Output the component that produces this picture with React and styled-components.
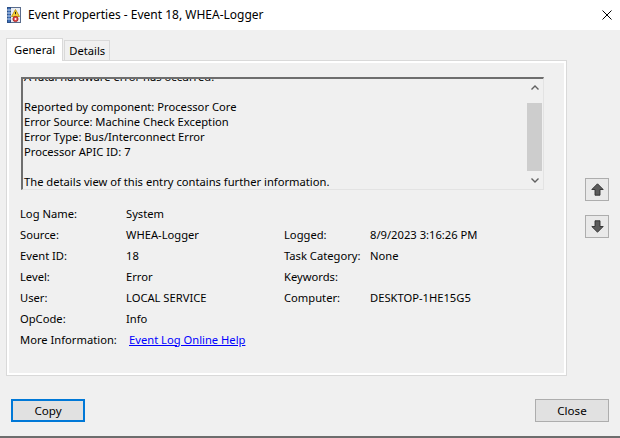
import React from 'react';
import styled, { createGlobalStyle } from 'styled-components';

const Global = createGlobalStyle`
  html, body { margin: 0; padding: 0; background: #f0f0f0; }
  body {
    font-family: "Noto Sans", "Open Sans", sans-serif;
    font-size: 11.2px;
    color: #000;
  }
`;

const Window = styled.div`
  width: 620px;
  height: 438px;
  box-sizing: border-box;
  background: #f0f0f0;
  border-bottom: 2px solid #6d6d6d;
  display: flex;
  flex-direction: column;
  overflow: hidden;
`;

const TitleBar = styled.div`
  height: 30px;
  flex: none;
  background: #fff;
  display: flex;
  align-items: center;
  padding-left: 7px;
  gap: 7px;
`;

const TitleText = styled.div`
  flex: 1;
  font-size: 12px;
  line-height: 16px;
  white-space: nowrap;
`;

const CloseX = styled.div`
  width: 10px;
  height: 10px;
  margin-right: 8px;
  display: flex;
`;

const Main = styled.div`
  display: flex;
  margin-top: 8px;
  padding-left: 6px;
`;

const TabArea = styled.div`
  width: 561px;
  display: flex;
  flex-direction: column;
`;

const TabStrip = styled.div`
  height: 22px;
  display: flex;
  align-items: flex-end;
  position: relative;
  z-index: 1;
`;

const Tab = styled.div`
  box-sizing: border-box;
  height: ${p => (p.$active ? 23 : 20)}px;
  margin-bottom: ${p => (p.$active ? -1 : 0)}px;
  margin-left: ${p => (p.$active ? 0 : 1)}px;
  padding: ${p => (p.$active ? '2px 7px 0 7px' : '1px 4px 0 4px')};
  background: ${p => (p.$active ? '#fff' : '#f0f0f0')};
  border: 1px solid #d9d9d9;
  border-bottom: none;
  line-height: 17px;
  white-space: nowrap;
`;

const Panel = styled.div`
  box-sizing: border-box;
  height: 316px;
  border: 1px solid #d9d9d9;
  box-shadow: inset 0 0 0 2px #fff;
  padding: 16px 0 0 14px;
  display: flex;
  flex-direction: column;
`;

const TextBox = styled.div`
  box-sizing: border-box;
  width: 523px;
  height: 113px;
  border-top: 2px solid #6e6e6e;
  border-left: 2px solid #6e6e6e;
  border-right: 1px solid #e3e3e3;
  border-bottom: 1px solid #e3e3e3;
  display: flex;
  background: #f0f0f0;
`;

const TextViewport = styled.div`
  flex: 1;
  overflow: hidden;
  padding-left: 1px;
`;

const TextContent = styled.div`
  margin-top: -10px;
  line-height: 15px;
  white-space: pre;
`;

const ScrollBar = styled.div`
  width: 17px;
  display: flex;
  flex-direction: column;
  background: #f0f0f0;
`;

const ScrollBtn = styled.div`
  height: 17px;
  display: flex;
  align-items: center;
  justify-content: center;
`;

const ScrollTrack = styled.div`
  flex: 1;
  display: flex;
  flex-direction: column;
  align-items: center;
`;

const Thumb = styled.div`
  width: 15px;
  background: #cdcdcd;
`;

const Fields = styled.div`
  margin-top: 13px;
  margin-left: -1px;
  display: grid;
  grid-template-columns: 106px 158px 86px 1fr;
  grid-auto-rows: 21px;
  align-items: center;
  line-height: 16px;
`;

const Cell = styled.div`
  white-space: nowrap;
`;

const Link = styled.a`
  color: #0000ff;
  text-decoration: underline;
  margin-left: 3px;
  cursor: pointer;
`;

const Side = styled.div`
  margin-left: 18px;
  padding-top: 140px;
  display: flex;
  flex-direction: column;
  gap: 14px;
`;

const ArrowBtn = styled.div`
  box-sizing: border-box;
  width: 24px;
  height: 23px;
  border: 1px solid #adadad;
  background: #e9e9e9;
  display: flex;
  align-items: center;
  justify-content: center;
`;

const Footer = styled.div`
  margin-top: 23px;
  padding: 0 11px;
  display: flex;
  justify-content: space-between;
`;

const Button = styled.div`
  box-sizing: border-box;
  width: 74px;
  height: 23px;
  background: #e1e1e1;
  border: ${p => (p.$default ? '2px solid #0078d7' : '1px solid #adadad')};
  display: flex;
  align-items: center;
  justify-content: center;
  font-size: 11.6px;
  line-height: 16px;
`;

const LogIcon = () => (
  <svg width="14" height="16" viewBox="0 0 14 16">
    <rect x="2.5" y="0.5" width="11" height="15" fill="#e8edf5" stroke="#5a6c8c" />
    <rect x="0.5" y="0.5" width="3" height="15" fill="#3d6fb8" stroke="#2b4f86" />
    <path d="M0 3h4M0 6h4M0 9h4M0 12h4" stroke="#c9d6ea" strokeWidth="1" />
    <path d="M8.5 2.5 L12.5 9.5 H4.5 Z" fill="#f6d23a" stroke="#b58b00" strokeWidth="0.8" />
    <path d="M8.5 4.8v2.4" stroke="#222" strokeWidth="1" />
    <circle cx="8.5" cy="12" r="2.6" fill="#e04848" stroke="#9c1f1f" strokeWidth="0.8" />
    <circle cx="8.5" cy="12" r="1" fill="#fff" />
  </svg>
);

const Chevron = ({ up }) => (
  <svg width="8" height="5" viewBox="0 0 8 5">
    <path d={up ? 'M0.5 4.5 L4 1 L7.5 4.5' : 'M0.5 0.5 L4 4 L7.5 0.5'} fill="none" stroke="#606060" strokeWidth="1.4" />
  </svg>
);

const BlockArrow = ({ up }) => (
  <svg width="13" height="13" viewBox="0 0 13 13">
    <path
      d={up ? 'M6.5 0.8 L12.2 6.5 H9 V12.2 H4 V6.5 H0.8 Z' : 'M6.5 12.2 L12.2 6.5 H9 V0.8 H4 V6.5 H0.8 Z'}
      fill="#5c5c5c"
      stroke="#2e2e2e"
      strokeWidth="0.9"
      strokeLinejoin="round"
    />
  </svg>
);

const message = [
  'A fatal hardware error has occurred.',
  '',
  'Reported by component: Processor Core',
  'Error Source: Machine Check Exception',
  'Error Type: Bus/Interconnect Error',
  'Processor APIC ID: 7',
  '',
  'The details view of this entry contains further information.',
].join('\n');

const rows = [
  ['Log Name:', 'System', '', ''],
  ['Source:', 'WHEA-Logger', 'Logged:', '8/9/2023 3:16:26 PM'],
  ['Event ID:', '18', 'Task Category:', 'None'],
  ['Level:', 'Error', 'Keywords:', ''],
  ['User:', 'LOCAL SERVICE', 'Computer:', 'DESKTOP-1HE15G5'],
  ['OpCode:', 'Info', '', ''],
];

export default function App() {
  return (
    <>
      <Global />
      <Window>
        <TitleBar>
          <LogIcon />
          <TitleText>Event Properties - Event 18, WHEA-Logger</TitleText>
          <CloseX>
            <svg width="10" height="10" viewBox="0 0 10 10">
              <path d="M0.5 0.5 L9.5 9.5 M9.5 0.5 L0.5 9.5" stroke="#000" strokeWidth="1" />
            </svg>
          </CloseX>
        </TitleBar>
        <Main>
          <TabArea>
            <TabStrip>
              <Tab $active>General</Tab>
              <Tab>Details</Tab>
            </TabStrip>
            <Panel>
              <TextBox>
                <TextViewport>
                  <TextContent>{message}</TextContent>
                </TextViewport>
                <ScrollBar>
                  <ScrollBtn><Chevron up /></ScrollBtn>
                  <ScrollTrack>
                    <Thumb style={{ marginTop: 7, height: 68 }} />
                  </ScrollTrack>
                  <ScrollBtn><Chevron /></ScrollBtn>
                </ScrollBar>
              </TextBox>
              <Fields>
                {rows.map((r, i) => (
                  <React.Fragment key={i}>
                    <Cell>{r[0]}</Cell>
                    <Cell>{r[1]}</Cell>
                    <Cell>{r[2]}</Cell>
                    <Cell>{r[3]}</Cell>
                  </React.Fragment>
                ))}
                <Cell>More Information:</Cell>
                <Cell><Link>Event Log Online Help</Link></Cell>
                <Cell />
                <Cell />
              </Fields>
            </Panel>
          </TabArea>
          <Side>
            <ArrowBtn><BlockArrow up /></ArrowBtn>
            <ArrowBtn><BlockArrow /></ArrowBtn>
          </Side>
        </Main>
        <Footer>
          <Button $default>Copy</Button>
          <Button>Close</Button>
        </Footer>
      </Window>
    </>
  );
}
